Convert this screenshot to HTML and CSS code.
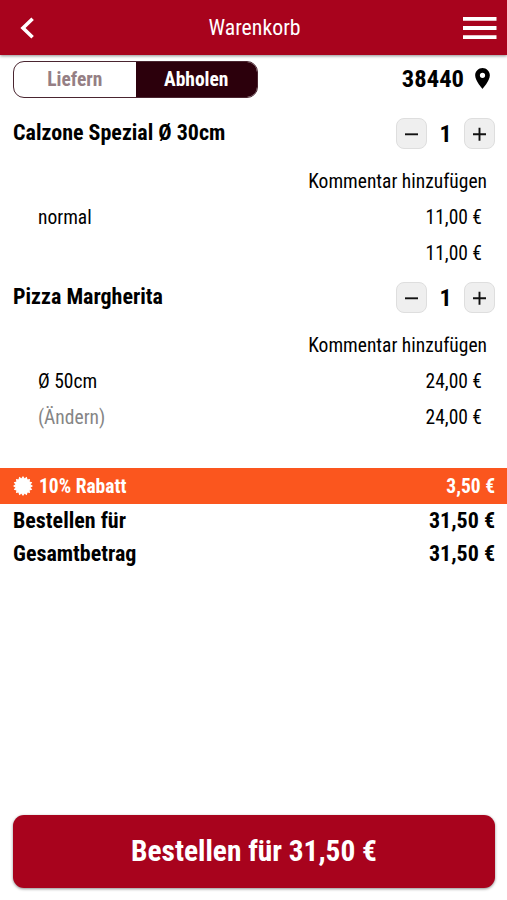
FILE: index.html
```html
<!DOCTYPE html>
<html lang="de">
<head>
<meta charset="utf-8">
<title>Warenkorb</title>
<link rel="stylesheet" href="styles.css">
</head>
<body>
<header class="topbar">
  <svg class="back" viewBox="0 0 14 22"><path d="M12.6 1.8 3 11l9.6 9.2"/></svg>
  <h1 class="title">Warenkorb</h1>
  <svg class="menu" viewBox="0 0 34 24"><path d="M0 2.8h33.5M0 12h33.5M0 21.2h33.5"/></svg>
</header>
<main class="content">
  <div class="mode">
    <div class="toggle"><span class="option">Liefern</span><span class="option active">Abholen</span></div>
    <div class="place"><span>38440</span><svg class="pin" viewBox="5 2 14 20"><path fill-rule="evenodd" d="M12 2C8.13 2 5 5.13 5 9c0 5.25 7 13 7 13s7-7.75 7-13c0-3.87-3.13-7-7-7zm0 9.5a2.5 2.5 0 1 1 0-5 2.5 2.5 0 0 1 0 5z"/></svg></div>
  </div>
  <section class="item">
    <div class="item-head">
      <h2 class="name">Calzone Spezial Ø 30cm</h2>
      <div class="stepper">
        <span class="step"><svg viewBox="0 0 14 14"><path d="M0 7.3h13"/></svg></span>
        <span class="count">1</span>
        <span class="step"><svg viewBox="0 0 14 14"><path d="M0 7.3h13M6.5 .8v13"/></svg></span>
      </div>
    </div>
    <div class="comment">Kommentar hinzufügen</div>
    <div class="line"><span>normal</span><span>11,00 €</span></div>
    <div class="line"><span></span><span>11,00 €</span></div>
  </section>
  <section class="item">
    <div class="item-head">
      <h2 class="name">Pizza Margherita</h2>
      <div class="stepper">
        <span class="step"><svg viewBox="0 0 14 14"><path d="M0 7.3h13"/></svg></span>
        <span class="count">1</span>
        <span class="step"><svg viewBox="0 0 14 14"><path d="M0 7.3h13M6.5 .8v13"/></svg></span>
      </div>
    </div>
    <div class="comment">Kommentar hinzufügen</div>
    <div class="line"><span>Ø 50cm</span><span>24,00 €</span></div>
    <div class="line"><span class="muted">(Ändern)</span><span>24,00 €</span></div>
  </section>
  <div class="discount">
    <svg class="badge" viewBox="-10 -10 20 20"><circle r="8"/><path d="M0-10 1.8-7.5h-3.6zM0 10 1.8 7.5h-3.6zM-10 0-7.5 1.8v-3.6zM10 0 7.5 1.8v-3.6z" id="spikes"/><use href="#spikes" transform="rotate(22.5)"/><use href="#spikes" transform="rotate(45)"/><use href="#spikes" transform="rotate(67.5)"/></svg>
    <span class="discount-name">10% Rabatt</span><span>3,50 €</span>
  </div>
  <div class="total"><span>Bestellen für</span><span>31,50 €</span></div>
  <div class="total"><span>Gesamtbetrag</span><span>31,50 €</span></div>
</main>
<button class="order">Bestellen für 31,50 €</button>
</body>
</html>
```

FILE: styles.css
```css
* { box-sizing: border-box; }
body {
  margin: 0;
  height: 900px;
  display: flex;
  flex-direction: column;
  overflow: hidden;
  background: #fff;
  color: #000;
  font-family: "Roboto Condensed", Roboto, sans-serif;
  font-stretch: 75%;
  font-size: 19.5px;
  font-weight: 430;
}
h1, h2 { margin: 0; }
svg { display: block; flex: none; }
.topbar {
  height: 55px;
  flex: none;
  display: grid;
  grid-template-columns: 34px 1fr 42px;
  align-items: center;
  padding: 0 10px 0 20px;
  background: #a8031d;
  color: #fff;
  box-shadow: 0 1px 3px rgba(0, 0, 0, .45);
}
.back { width: 14px; height: 22px; fill: none; stroke: #fff; stroke-width: 3.6; }
.menu { width: 34px; height: 24px; fill: none; stroke: #fff; stroke-width: 3.8; justify-self: end; }
.title { font-size: 21.8px; font-weight: 430; text-align: center; line-height: 55px; }
.content { flex: 1; }
.mode { height: 48px; padding: 6px 17px 5px 13px; display: flex; justify-content: space-between; align-items: center; }
.toggle { width: 245px; height: 37px; border: 1px solid #4a2530; border-radius: 11px; overflow: hidden; display: flex; }
.option { flex: 1; text-align: center; line-height: 36px; font-weight: 700; color: #957f85; }
.active { background: #2c000c; color: #fff; }
.place { display: flex; align-items: center; gap: 11px; font-size: 24.6px; font-weight: 700; line-height: 35px; padding-bottom: 2px; }
.pin { width: 15px; height: 21px; }
.item { height: 164px; }
.item-head { height: 60px; padding: 0 12px 0 13px; display: flex; justify-content: space-between; align-items: center; }
.name { font-size: 22px; font-weight: 700; line-height: 30px; }
.stepper { display: flex; padding-top: 2px; }
.step { width: 31px; height: 31px; border: 1px solid #dedede; border-radius: 8px; background: #efefef; display: grid; place-items: center; }
.step svg { width: 14px; height: 14px; stroke: #111; stroke-width: 1.9; }
.count { width: 37px; text-align: center; font-size: 24px; font-weight: 700; line-height: 32px; }
.comment { height: 36px; line-height: 38px; text-align: right; padding-right: 20px; }
.line { height: 36px; line-height: 38px; display: flex; justify-content: space-between; padding: 0 25px 0 38px; }
.muted { color: #858585; }
.discount { height: 36px; margin-top: 37px; padding: 0 12px 0 13px; display: flex; align-items: center; background: #fb561e; color: #fff; font-weight: 700; }
.badge { width: 20px; height: 20px; margin-right: 6px; fill: #fff; }
.discount-name { flex: 1; }
.total { height: 33px; line-height: 33px; padding: 0 12px 0 13px; display: flex; justify-content: space-between; font-size: 22px; font-weight: 700; }
.order {
  flex: none;
  height: 73px;
  margin: 0 12px 12px 13px;
  padding: 0 0 2px;
  border: 0;
  border-radius: 11px;
  background: #a8031d;
  color: #fff;
  font: inherit;
  font-stretch: 75%;
  font-size: 29.4px;
  font-weight: 700;
  box-shadow: 0 1px 3px rgba(0, 0, 0, .45);
}
```
